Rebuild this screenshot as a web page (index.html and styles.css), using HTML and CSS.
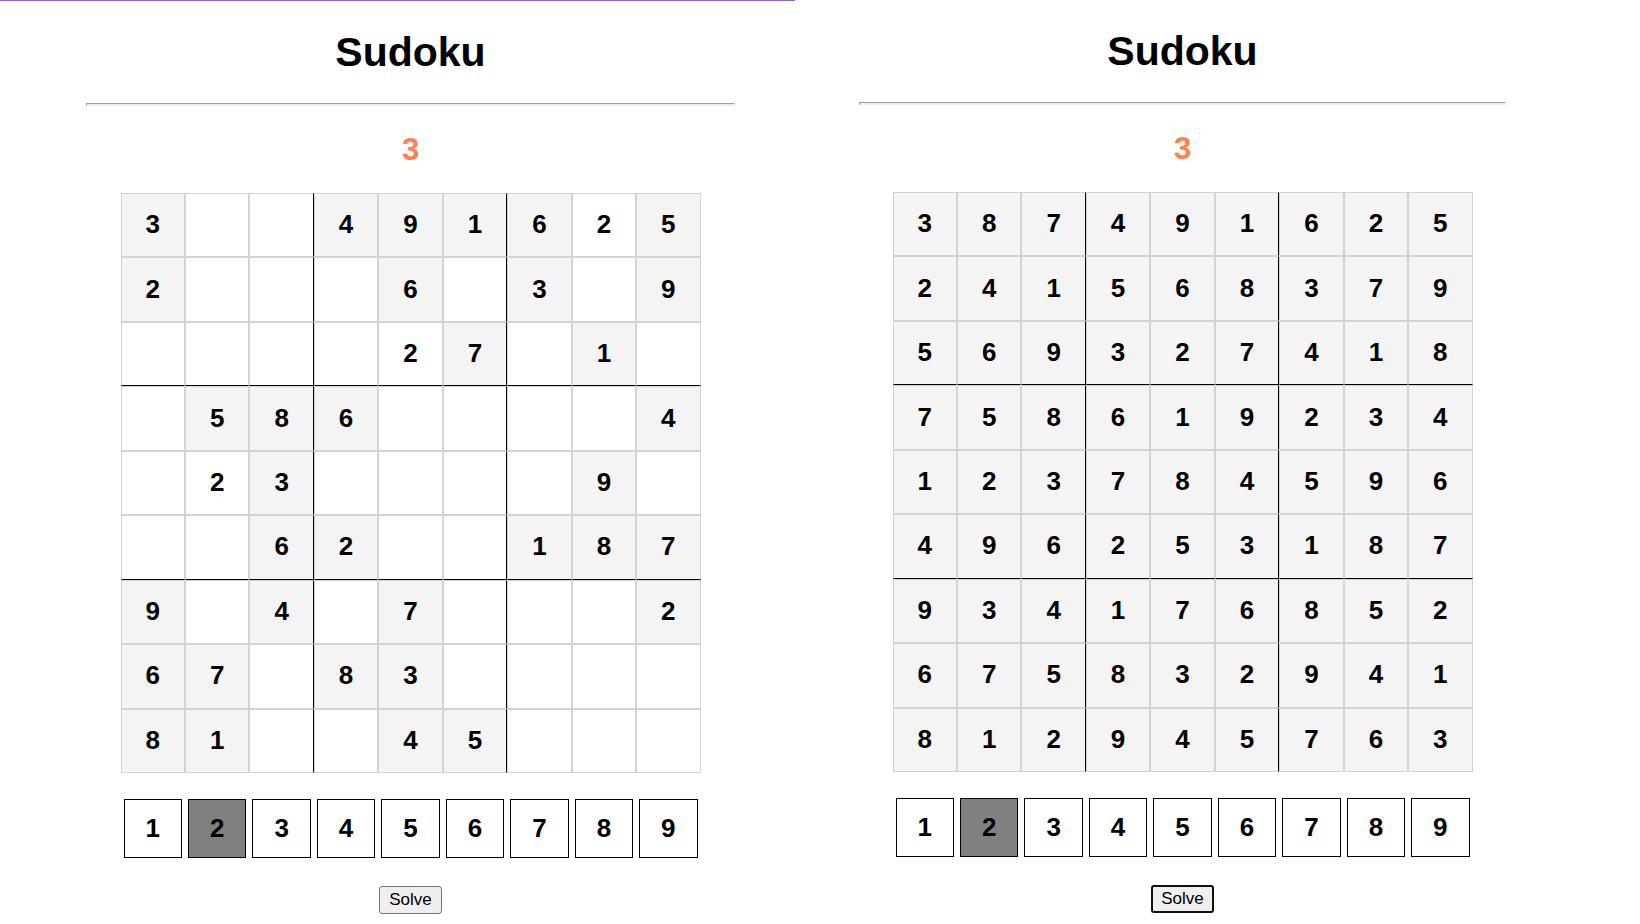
FILE: index.html
```html
<!DOCTYPE html>
<html lang="en">
<head>
<meta charset="utf-8">
<title>Sudoku</title>
<link rel="stylesheet" href="styles.css">
</head>
<body>
<main class="compare">
  <section class="pane pane-start">
    <h1 class="title">Sudoku</h1>
    <hr class="rule">
    <h2 class="errors">3</h2>
    <div class="board" data-givens="3--491625/2---6-3-9/----27-1-/-586----4/-23----9-/--62--187/9-4-7---2/67-83----/81--45---" data-entered="7 22 37"></div>
    <div class="digits"></div>
    <button class="solve" type="button">Solve</button>
  </section>
  <section class="pane pane-solved">
    <h1 class="title">Sudoku</h1>
    <hr class="rule">
    <h2 class="errors">3</h2>
    <div class="board" data-givens="387491625/241568379/569327418/758619234/123784596/496253187/934176852/675832941/812945763" data-entered=""></div>
    <div class="digits"></div>
    <button class="solve solve-focused" type="button">Solve</button>
  </section>
</main>
<script src="script.js"></script>
</body>
</html>
```
FILE: styles.css
```css
* {
  box-sizing: border-box;
}

body {
  margin: 0;
  background: #fff;
  color: #000;
  font-family: "Liberation Sans", Arial, Helvetica, sans-serif;
}

.compare {
  display: grid;
  grid-template-columns: 795fr 845fr;
}

.pane {
  display: flex;
  flex-direction: column;
  align-items: center;
  gap: 26px;
}

.pane-start {
  border-top: 1px solid #9169b9;
  padding: 28px 60px 0 86px;
}

.pane-solved {
  padding: 28px 134px 0 64px;
}

.title {
  margin: 0;
  padding-bottom: 2px;
  font-size: 41px;
  line-height: 46px;
}

.rule {
  width: 100%;
  height: 3px;
  margin: 0;
  border: 1px solid;
  border-color: #9f9f9f #eee #eee #9f9f9f;
  background: #eee;
}

.errors {
  margin: 0;
  color: coral;
  font-size: 31px;
  line-height: 35px;
}

.board {
  display: grid;
  grid-template-columns: repeat(9, 1fr);
  width: 100%;
  max-width: 580px;
}

.cell {
  display: flex;
  align-items: center;
  justify-content: center;
  aspect-ratio: 1;
  padding-bottom: 2px;
  border: 1px solid lightgray;
  font-size: 26px;
  font-weight: bold;
  line-height: 30px;
}

.cell-given {
  background: #f4f4f4;
}

.cell-box-right {
  border-right-color: #000;
}

.cell-box-bottom {
  border-bottom-color: #000;
}

.digits {
  display: grid;
  grid-template-columns: repeat(9, 1fr);
  gap: 6px;
  width: 100%;
  max-width: 580px;
  padding: 0 3px;
}

.digit {
  aspect-ratio: 1;
  padding: 0;
  border: 1px solid #000;
  background: #fff;
  color: #000;
  font: bold 26px/30px "Liberation Sans", Arial, sans-serif;
}

.digit-selected {
  background: gray;
}

.solve {
  margin-top: 2px;
  padding: 3px 9px;
  border: 1px solid #767676;
  border-radius: 3px;
  background: #efefef;
  color: #000;
  font: 17px/20px "Liberation Sans", Arial, sans-serif;
}

.solve-focused {
  border: 2px solid #101010;
  padding: 2px 8px;
}
```
FILE: script.js
```javascript
document.querySelectorAll(".board").forEach((board) => {
  const entered = board.dataset.entered.split(" ");
  board.dataset.givens.split("/").forEach((row, r) => {
    [...row].forEach((value, c) => {
      const cell = document.createElement("div");
      cell.className = "cell";
      if (value !== "-") {
        cell.textContent = value;
        if (!entered.includes(String(r * 9 + c))) cell.classList.add("cell-given");
      }
      if (c === 2 || c === 5) cell.classList.add("cell-box-right");
      if (r === 2 || r === 5) cell.classList.add("cell-box-bottom");
      board.append(cell);
    });
  });
});

document.querySelectorAll(".digits").forEach((digits) => {
  for (let n = 1; n <= 9; n++) {
    const button = document.createElement("button");
    button.type = "button";
    button.className = n === 2 ? "digit digit-selected" : "digit";
    button.textContent = n;
    digits.append(button);
  }
});
```
